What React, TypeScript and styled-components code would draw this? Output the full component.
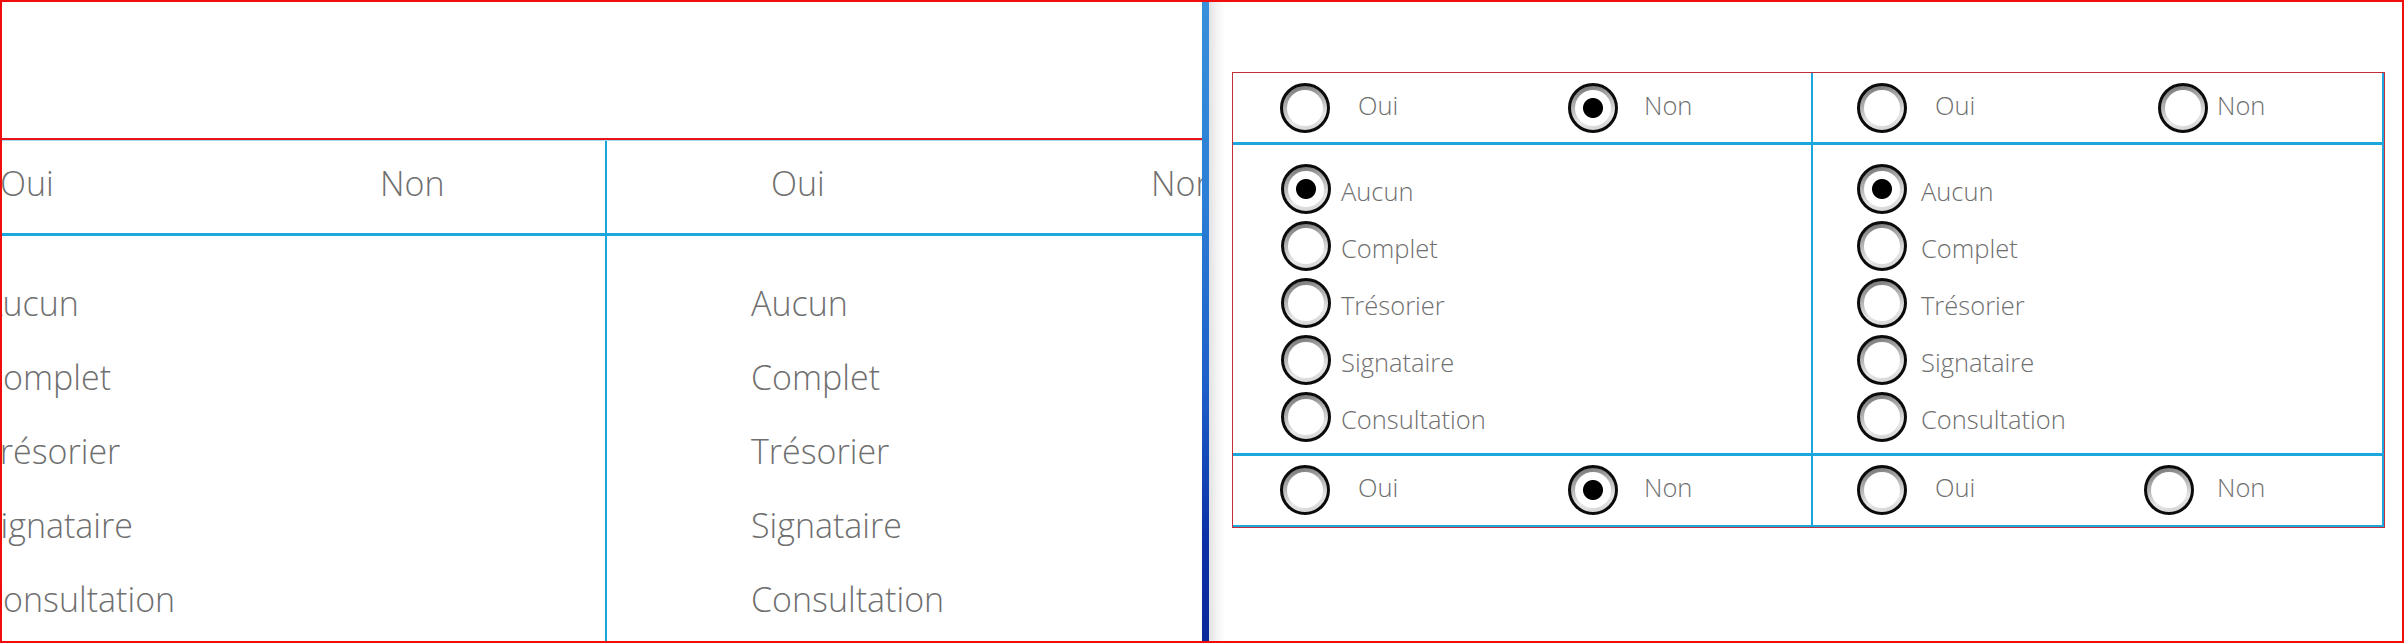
import React from "react";
import styled, { createGlobalStyle } from "styled-components";

const cyan = "#1ba6dc";
const grey = "#6f6f6f";

const GlobalStyle = createGlobalStyle`
  html, body {
    margin: 0;
    padding: 0;
    background: #fff;
  }
  body {
    font-family: "Open Sans", "Noto Sans", sans-serif;
  }
`;

const Frame = styled.div`
  box-sizing: border-box;
  width: 2404px;
  height: 643px;
  border: 2px solid #f20d0d;
  display: flex;
  overflow: hidden;
  background: #fff;
`;

/* left: the same form, enlarged and cropped */
const ZoomPane = styled.div`
  box-sizing: border-box;
  flex: none;
  width: 1200px;
  padding-top: 136px;
  overflow: hidden;
`;

const ZoomTable = styled.div`
  width: 1529px;
  margin-left: -164px;
  border-top: 2px solid #e8141c;
`;

const ZoomRow = styled.div<{ $head?: boolean }>`
  display: grid;
  grid-template-columns: 769px 760px;
  height: ${p => (p.$head ? "92px" : "405px")};
  border-top: ${p => (p.$head ? "1px solid #9ddcf2" : "none")};
  border-bottom: ${p => (p.$head ? `3px solid ${cyan}` : "none")};
`;

const ZoomCell = styled.div<{ $first?: boolean; $list?: boolean }>`
  box-sizing: border-box;
  display: flex;
  flex-direction: ${p => (p.$list ? "column" : "row")};
  align-items: ${p => (p.$list ? "flex-start" : "center")};
  padding: ${p => (p.$list ? "30px 0 0 144px" : `0 0 8px ${p.$first ? 162 : 164}px`)};
  border-right: ${p => (p.$first ? `2px solid ${cyan}` : "none")};
`;

const ZoomText = styled.span<{ $w?: number }>`
  width: ${p => (p.$w ? `${p.$w}px` : "auto")};
  font-size: 34px;
  font-weight: 300;
  line-height: ${p => (p.$w !== undefined ? "normal" : "74px")};
  color: ${grey};
  white-space: nowrap;
`;

const SplitBar = styled.div`
  flex: none;
  width: 7px;
  background: linear-gradient(
    180deg,
    #3a8fdb 0%,
    #2b7fd6 30%,
    #1d5fc8 60%,
    #0c2fa6 85%,
    #0a2a9a 100%
  );
`;

/* right: the form itself */
const Stage = styled.div`
  box-sizing: border-box;
  flex: 1;
  padding: 70px 0 0 23px;
  background: linear-gradient(90deg, #e2e2e2 0, #f4f4f4 8px, #fff 16px);
`;

const Table = styled.div`
  box-sizing: border-box;
  width: 1153px;
  border: 1px solid #c22f3a;
  box-shadow: inset -2px -2px 0 ${cyan};
`;

const Row = styled.div<{ $h: number; $last?: boolean }>`
  display: grid;
  grid-template-columns: 580px 1fr;
  height: ${p => p.$h}px;
  border-bottom: ${p => (p.$last ? "none" : `3px solid ${cyan}`)};
`;

const Cell = styled.div<{ $first?: boolean; $pad: number; $list?: boolean; $low?: number }>`
  box-sizing: border-box;
  display: flex;
  flex-direction: ${p => (p.$list ? "column" : "row")};
  align-items: ${p => (p.$list ? "flex-start" : "center")};
  gap: ${p => (p.$list ? "7px" : "0")};
  padding: ${p => (p.$list ? `19px 0 0 ${p.$pad}px` : `0 0 ${p.$low || 0}px ${p.$pad}px`)};
  border-right: ${p => (p.$first ? `2px solid ${cyan}` : "none")};
`;

const Choice = styled.label<{ $w?: number }>`
  display: flex;
  align-items: center;
  width: ${p => (p.$w ? `${p.$w}px` : "auto")};
  height: 50px;
`;

const Radio = styled.span<{ $on?: boolean }>`
  flex: none;
  box-sizing: border-box;
  width: 50px;
  height: 50px;
  border-radius: 50%;
  border: 3px solid #0b0b0b;
  padding: 4px;
  display: flex;
  background: linear-gradient(165deg, #6a6a6a 0%, #a4a4a4 30%, #e6e6e6 70%, #cfcfcf 100%);
  &::after {
    content: "";
    flex: 1;
    border-radius: 50%;
    background: ${p =>
      p.$on ? "radial-gradient(circle, #000 0 9.5px, #fff 10.5px)" : "#fff"};
  }
`;

const Label = styled.span<{ $gap: number; $lift?: boolean }>`
  margin-left: ${p => p.$gap}px;
  padding: ${p => (p.$lift ? "0 0 6px" : "4px 0 0")};
  font-size: 25.5px;
  font-weight: 300;
  color: ${grey};
  white-space: nowrap;
`;

type Opt = { label: string; w?: number; gap: number; on?: boolean };
type Side = { pad: number; opts: Opt[] };

const topRow: Side[] = [
  { pad: 47, opts: [{ label: "Oui", w: 288, gap: 28 }, { label: "Non", gap: 26, on: true }] },
  { pad: 44, opts: [{ label: "Oui", w: 301, gap: 28 }, { label: "Non", gap: 9 }] },
];

const bottomRow: Side[] = [
  { pad: 47, opts: [{ label: "Oui", w: 288, gap: 28 }, { label: "Non", gap: 26, on: true }] },
  { pad: 44, opts: [{ label: "Oui", w: 287, gap: 28 }, { label: "Non", gap: 23 }] },
];

const roles = ["Aucun", "Complet", "Trésorier", "Signataire", "Consultation"];
const listSides = [
  { pad: 48, gap: 10 },
  { pad: 44, gap: 14 },
];

function ChoiceRow({ sides, h, last, low }: { sides: Side[]; h: number; last?: boolean; low?: number }) {
  return (
    <Row $h={h} $last={last}>
      {sides.map((s, i) => (
        <Cell key={i} $first={i === 0} $pad={s.pad} $low={low}>
          {s.opts.map(o => (
            <Choice key={o.label} $w={o.w}>
              <Radio $on={o.on} />
              <Label $gap={o.gap} $lift>
                {o.label}
              </Label>
            </Choice>
          ))}
        </Cell>
      ))}
    </Row>
  );
}

export default function App() {
  return (
    <>
      <GlobalStyle />
      <Frame>
        <ZoomPane>
          <ZoomTable>
            <ZoomRow $head>
              {[0, 1].map(i => (
                <ZoomCell key={i} $first={i === 0}>
                  <ZoomText $w={380}>Oui</ZoomText>
                  <ZoomText $w={0}>Non</ZoomText>
                </ZoomCell>
              ))}
            </ZoomRow>
            <ZoomRow>
              {[0, 1].map(i => (
                <ZoomCell key={i} $first={i === 0} $list>
                  {roles.map(r => (
                    <ZoomText key={r}>{r}</ZoomText>
                  ))}
                </ZoomCell>
              ))}
            </ZoomRow>
          </ZoomTable>
        </ZoomPane>
        <SplitBar />
        <Stage>
          <Table>
            <ChoiceRow sides={topRow} h={69} />
            <Row $h={308}>
              {listSides.map((s, i) => (
                <Cell key={i} $first={i === 0} $pad={s.pad} $list>
                  {roles.map((r, j) => (
                    <Choice key={r}>
                      <Radio $on={j === 0} />
                      <Label $gap={s.gap}>{r}</Label>
                    </Choice>
                  ))}
                </Cell>
              ))}
            </Row>
            <ChoiceRow sides={bottomRow} h={71} last low={4} />
          </Table>
        </Stage>
      </Frame>
    </>
  );
}
